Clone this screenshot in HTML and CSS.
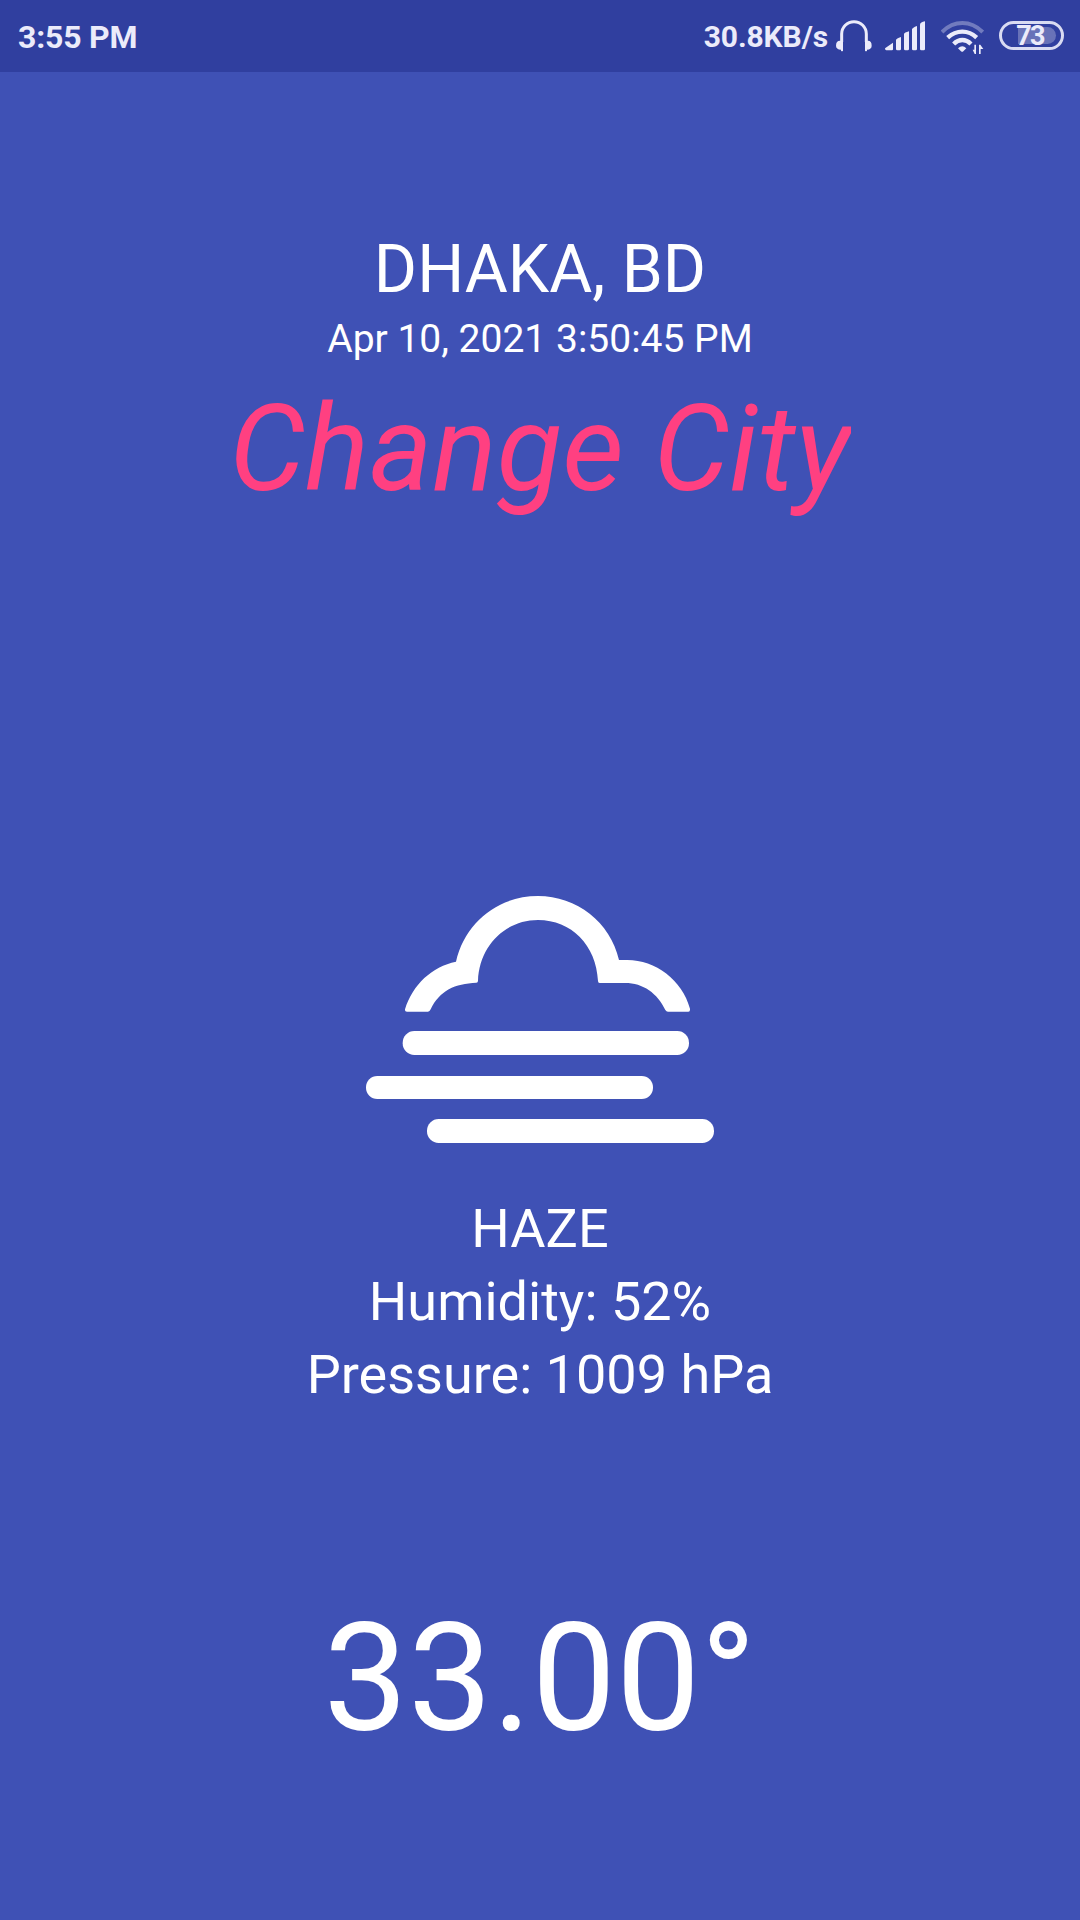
FILE: index.html
```html
<!DOCTYPE html>
<html lang="en">
<head>
<meta charset="utf-8">
<title>Weather</title>
<link rel="stylesheet" href="styles.css">
</head>
<body>
<header class="status">
  <span class="clock">3:55 PM</span>
  <div class="indicators">
    <span class="speed">30.8KB/s</span>
    <svg class="headphones" viewBox="0 0 108 96">
      <path d="M17 66V42a37 37 0 0 1 74 0V66" fill="none" stroke="currentColor" stroke-width="9"/>
      <path d="M12 62h9V92q-3 4-6 0l0-3Q0 88 0 77Q0 62 12 62ZM96 62h-9V92q3 4 6 0v-3Q107 88 107 77Q107 62 96 62Z" fill="currentColor"/>
    </svg>
    <svg class="signal" viewBox="0 0 120 90" fill="currentColor">
      <path d="M0 82L24 65V85Q24 88 21 88H4Q0 88 0 82ZM33 57Q34 53 48 48V84Q48 88 44 88H37Q33 88 33 84ZM57 39Q58 35 72 31V84Q72 88 68 88H61Q57 88 57 84ZM81 25Q82 20 96 15V84Q96 88 92 88H85Q81 88 81 84ZM105 11Q106 3 120 1V84Q120 88 116 88H109Q105 88 105 84Z"/>
    </svg>
    <svg class="wifi" viewBox="0 0 129 102">
      <g fill="none" stroke="currentColor">
        <path d="M3 36Q30 9 64 9T125 36" stroke-width="12" opacity=".35"/>
        <path d="M20 53Q40 35 64 35T107 53" stroke-width="13"/>
        <path d="M38 72Q50 60 64 60T90 72" stroke-width="13"/>
      </g>
      <path d="M51 85Q64 72 76 85L67 94Q64 97 60 94ZM105 74V102H101L95 89H100V74ZM114 102V74H118L127 87H119V102Z" fill="currentColor"/>
    </svg>
    <div class="battery"><span class="level">73</span></div>
  </div>
</header>
<main class="weather">
  <h1 class="city">DHAKA, BD</h1>
  <time class="updated">Apr 10, 2021 3:50:45 PM</time>
  <a class="change">Change City</a>
  <svg class="cloud" viewBox="0 0 1140 840" fill="#fff">
    <path d="M165 388C188 313 246 260 318 245C345 126 446 48 564 48C680 48 781 126 807 240H832C916 240 997 300 1020 386Q1021 395 1015 395H954Q949 395 946 390C922 340 880 309 825 309H749Q744 309 744 303C739 195 664 120 564 120C466 120 388 197 384 302Q384 308 379 308C315 311 269 331 242 388Q239 395 234 395H171Q164 395 165 388Z"/>
    <rect x="158" y="453" width="859" height="72" rx="35"/>
    <rect x="48" y="588" width="861" height="69" rx="34"/>
    <rect x="231" y="717" width="861" height="72" rx="35"/>
  </svg>
  <div class="details">
    <div>HAZE</div>
    <div>Humidity: 52%</div>
    <div>Pressure: 1009 hPa</div>
  </div>
  <div class="temperature">33.00°</div>
</main>
</body>
</html>
```
FILE: styles.css
```css
* { box-sizing: border-box; }
body {
  margin: 0;
  height: 1920px;
  overflow: hidden;
  background: #3f51b5;
  color: #fff;
  font-family: Roboto, sans-serif;
  white-space: nowrap;
}
.status {
  display: flex;
  justify-content: space-between;
  height: 72px;
  padding: 0 16px 0 18px;
  background: #303f9f;
  color: #ebebfa;
  font-weight: 700;
}
.clock { font-size: 32px; line-height: 74px; letter-spacing: -0.2px; }
.indicators { display: flex; align-items: flex-start; }
.speed { font-size: 30px; line-height: 73px; margin-right: 8px; letter-spacing: -0.1px; }
.headphones { width: 36px; height: 32px; margin: 20px 13px 0 0; }
.signal { width: 40px; height: 30px; margin: 21px 16px 0 0; }
.wifi { width: 43px; height: 34px; margin: 20px 15px 0 0; }
.battery {
  width: 65px;
  height: 29px;
  margin-top: 21px;
  padding: 3px 5px;
  border: 3px solid #d9dbf2;
  border-radius: 15px;
}
.level {
  display: block;
  height: 17px;
  padding-right: 3px;
  line-height: 18px;
  font-size: 27px;
  letter-spacing: -1.8px;
  text-align: center;
  border-radius: 9px;
  background: linear-gradient(90deg, transparent 11px, #6872b8 11px);
}
.weather {
  display: flex;
  flex-direction: column;
  align-items: center;
  padding-top: 161px;
}
.city { margin: 0; font-size: 66px; line-height: 73px; font-weight: 400; }
.updated { margin-top: 9px; font-size: 39px; line-height: 48px; }
.change {
  margin-top: 16px;
  font-size: 120px;
  line-height: 140px;
  font-style: italic;
  color: #ff4081;
  overflow: hidden;
}
.cloud { width: 380px; height: 280px; margin-top: 361px; }
.details { margin-top: 32px; font-size: 54px; line-height: 73px; text-align: center; }
.temperature { margin-top: 180px; font-size: 150px; line-height: 176px; }
```
